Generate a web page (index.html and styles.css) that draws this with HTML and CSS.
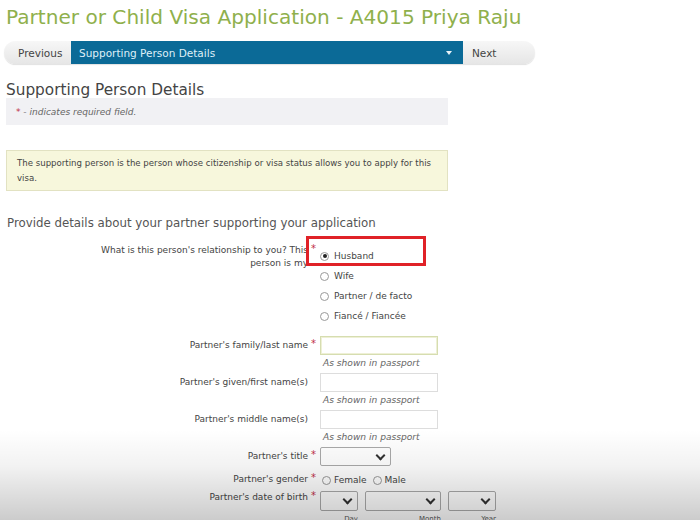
FILE: index.html
```html
<!DOCTYPE html>
<html>
<head>
<meta charset="utf-8">
<link rel="stylesheet" href="styles.css">
</head>
<body>
<div class="page">
  <h1 class="title">Partner or Child Visa Application - A4015 Priya Raju</h1>
  <div class="nav">
    <span class="nav-link prev">Previous</span>
    <div class="nav-select"><span>Supporting Person Details</span><span class="caret"></span></div>
    <span class="nav-link next">Next</span>
  </div>
  <h2 class="section">Supporting Person Details</h2>
  <div class="req-box"><span class="star">*</span> - indicates required field.</div>
  <div class="info-box">The supporting person is the person whose citizenship or visa status allows you to apply for this visa.</div>
  <h3 class="sub">Provide details about your partner supporting your application</h3>

  <div class="form">
    <div class="row rel">
      <div class="label">What is this person's relationship to you? This person is my</div>
      <div class="req">*</div>
      <div class="field radios">
        <label class="radio"><span class="rb on"></span>Husband</label>
        <label class="radio"><span class="rb"></span>Wife</label>
        <label class="radio"><span class="rb"></span>Partner / de facto</label>
        <label class="radio"><span class="rb"></span>Fiancé / Fiancée</label>
        <div class="highlight"></div>
      </div>
    </div>
    <div class="row name first">
      <div class="label">Partner's family/last name</div>
      <div class="req">*</div>
      <div class="field"><div class="input active"></div><div class="hint">As shown in passport</div></div>
    </div>
    <div class="row name">
      <div class="label">Partner's given/first name(s)</div>
      <div class="req"></div>
      <div class="field"><div class="input"></div><div class="hint">As shown in passport</div></div>
    </div>
    <div class="row name">
      <div class="label">Partner's middle name(s)</div>
      <div class="req"></div>
      <div class="field"><div class="input"></div><div class="hint">As shown in passport</div></div>
    </div>
    <div class="row ptitle">
      <div class="label">Partner's title</div>
      <div class="req">*</div>
      <div class="field"><div class="select w-title"><span class="chev"></span></div></div>
    </div>
    <div class="row gender">
      <div class="label">Partner's gender</div>
      <div class="req">*</div>
      <div class="field inline"><label class="radio"><span class="rb"></span>Female</label><label class="radio"><span class="rb"></span>Male</label></div>
    </div>
    <div class="row dob">
      <div class="label">Partner's date of birth</div>
      <div class="req">*</div>
      <div class="field inline dates">
        <div class="dcol"><div class="select w-day"><span class="chev"></span></div><div class="dl">Day</div></div>
        <div class="dcol"><div class="select w-month"><span class="chev"></span></div><div class="dl">Month</div></div>
        <div class="dcol"><div class="select w-year"><span class="chev"></span></div><div class="dl">Year</div></div>
      </div>
    </div>
  </div>
</div>
<div class="shade"></div>
</body>
</html>
```
FILE: styles.css
```css
html, body { margin: 0; padding: 0; background: #fff; }
body { font-family: "DejaVu Sans", Verdana, sans-serif; color: #444; width: 700px; height: 520px; overflow: hidden; position: relative; }
.page { padding: 0 0 0 6px; }
.title { margin: 0; padding-top: 6px; font-size: 20.1px; font-weight: normal; color: #8fb04c; line-height: 22px; height: 35px; white-space: nowrap; }
.nav { width: 531px; margin-left: -2px; height: 23px; border-radius: 12px; background: linear-gradient(#f7f7f7, #e6e6e6); box-shadow: 0 1px 1px rgba(0,0,0,0.12); display: flex; align-items: stretch; font-size: 10.5px; }
.nav-link { display: flex; align-items: center; color: #444; }
.prev { padding-left: 14px; width: 53px; }
.next { padding-left: 9px; }
.nav-select { width: 392px; background: #0b6a97; color: #dfeff8; display: flex; align-items: center; justify-content: space-between; padding: 0 8px; box-sizing: border-box; }
.caret { width: 0; height: 0; border-left: 3px solid transparent; border-right: 3px solid transparent; border-top: 4px solid #e8f2f8; margin-right: 3px; }
.section { margin: 18px 0 0; font-size: 15.3px; font-weight: normal; color: #444; line-height: 16px; }
.req-box { width: 442px; height: 27px; box-sizing: border-box; background: #f1f1f4; font-size: 9px; font-style: italic; color: #666; padding: 9px 0 0 10px; }
.star { color: #c03048; font-style: normal; }
.info-box { margin-top: 25px; width: 442px; height: 41px; box-sizing: border-box; background: #f7f7dc; border: 1px solid #e2e2c2; font-size: 8.6px; color: #444; padding: 5px 6px 0 10px; line-height: 15px; }
.sub { margin: 25px 0 0 1px; font-size: 11.8px; font-weight: normal; color: #555; line-height: 14px; }
.form { margin-top: 14px; font-size: 9px; color: #444; }
.row { display: grid; grid-template-columns: 302px 11px 1fr; }
.label { text-align: right; line-height: 13px; }
.req { color: #c03048; font-size: 10px; line-height: 10px; padding-left: 3px; }
.field { position: relative; padding-left: 1px; }
.rel .label { padding-left: 86px; padding-top: 0; }
.radios { padding-top: 2px; }
.radio { display: flex; align-items: center; height: 20px; font-size: 9px; color: #444; }
.rb { width: 9px; height: 9px; border: 1px solid #999; border-radius: 50%; margin-right: 5px; box-sizing: border-box; background: #fff; flex: none; position: relative; }
.rb.on::after { content: ""; position: absolute; left: 1.5px; top: 1.5px; width: 4px; height: 4px; border-radius: 50%; background: #222; }
.highlight { position: absolute; left: -13px; top: -8px; width: 120px; height: 30px; box-sizing: border-box; border: 3px solid #e02228; }
.name.first { margin-top: 10px; }
.name .label, .name .req { padding-top: 3px; }
.input { width: 118px; height: 19px; box-sizing: border-box; border: 1px solid #ddd; background: #fff; }
.input.active { border-color: #d6ddb0; box-shadow: inset 0 0 0 1px #eef0d6; }
.hint { font-style: italic; font-size: 9.1px; color: #666; padding: 2px 0 0 3px; height: 18px; box-sizing: border-box; line-height: 13px; }
.ptitle .label, .ptitle .req { padding-top: 3px; }
.select { height: 19px; box-sizing: border-box; border: 1px solid #aaa; border-radius: 2px; background: #fff; position: relative; }
.chev { position: absolute; right: 6px; top: 4px; width: 5px; height: 5px; border-right: 2px solid #333; border-bottom: 2px solid #333; transform: rotate(45deg); }
.w-title { width: 71px; }
.gender { margin-top: 7px; }
.gender .label { line-height: 12px; }
.inline { display: flex; }
.gender .radio { height: 14px; margin-right: 6px; }
.gender .rb { margin-right: 3px; }
.gender .field { padding-left: 3px; }
.dob { margin-top: 4px; }
.dates { gap: 7px; }
.dcol { display: flex; flex-direction: column; align-items: flex-end; }
.w-day { width: 38px; height: 20px; }
.w-month { width: 76px; height: 20px; }
.w-year { width: 48px; height: 20px; }
.dl { font-size: 7px; color: #555; padding-top: 4px; }
.shade { position: absolute; left: 0; right: 0; bottom: 0; height: 90px; background: linear-gradient(rgba(0,0,0,0), rgba(0,0,0,0.05) 40%, rgba(0,0,0,0.2)); pointer-events: none; }
```
